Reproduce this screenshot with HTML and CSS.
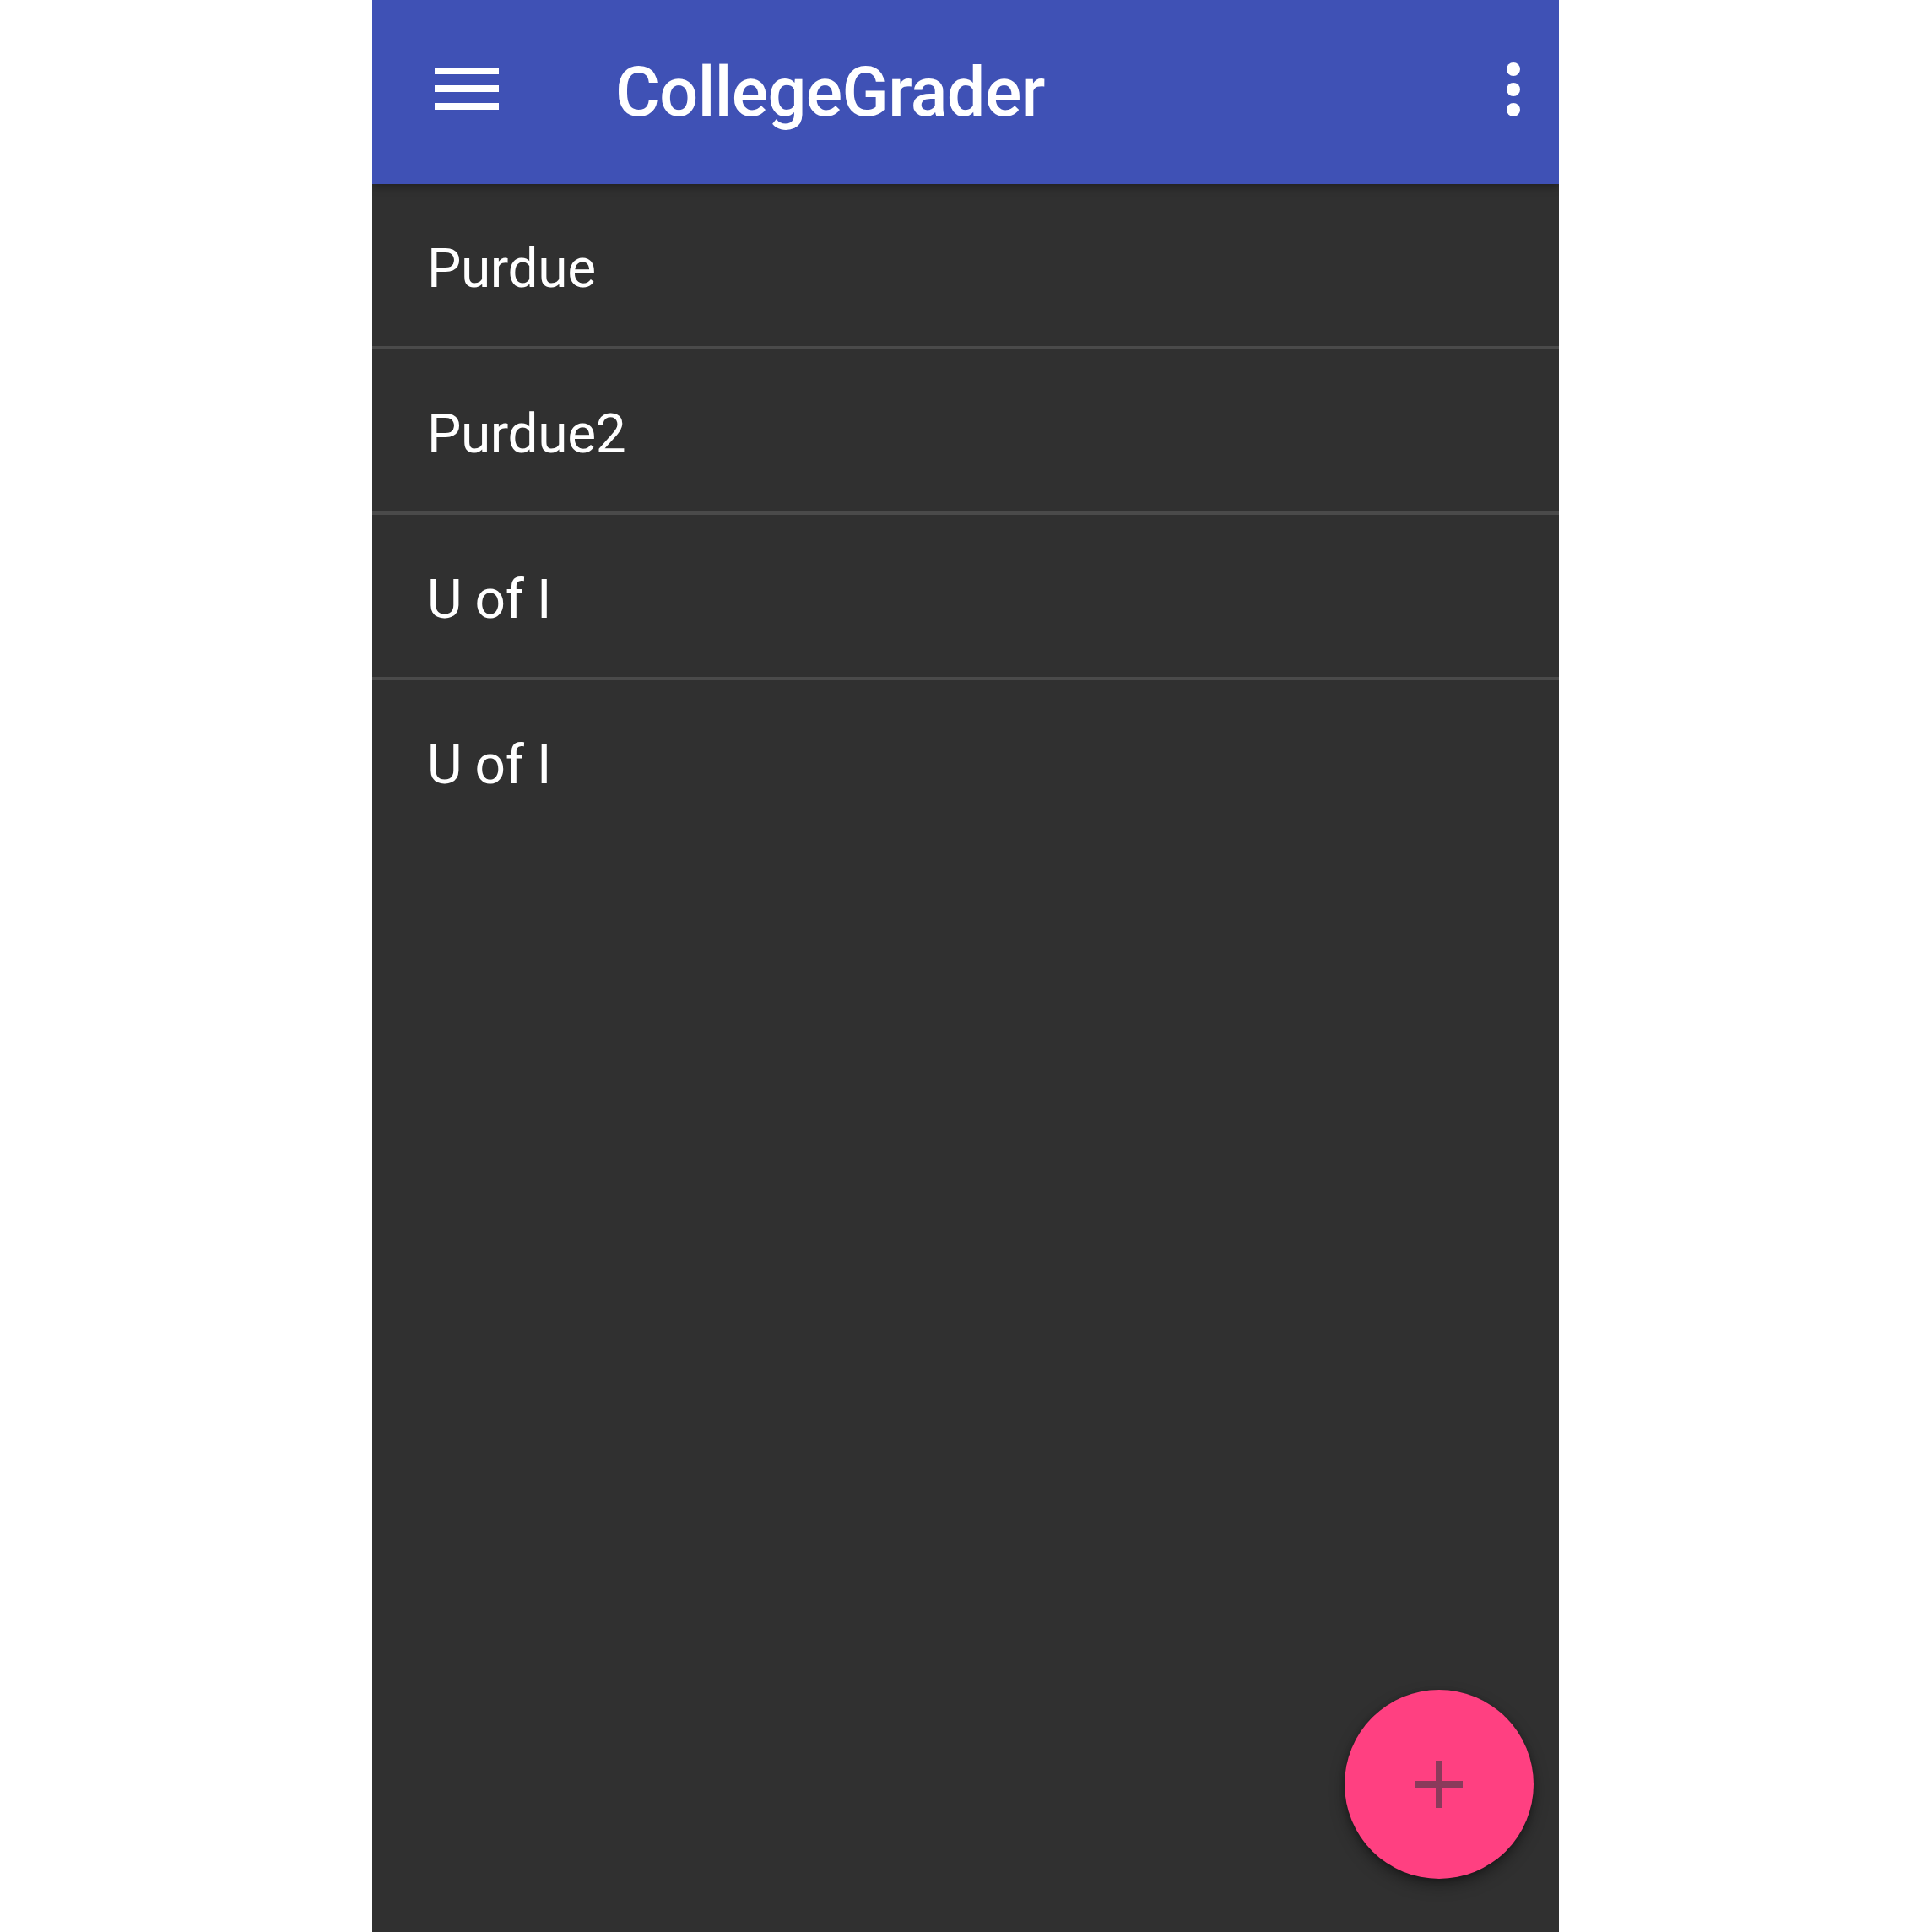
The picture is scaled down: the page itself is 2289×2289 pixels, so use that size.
FILE: index.html
```html
<!DOCTYPE html>
<html lang="en">
<head>
<meta charset="utf-8">
<title>CollegeGrader</title>
<link rel="stylesheet" href="styles.css">
</head>
<body>
<div class="phone">
  <header class="toolbar">
    <svg class="menu-icon" width="76" height="50" viewBox="0 0 76 50" aria-hidden="true">
      <rect x="0" y="0" width="76" height="8" fill="#fff"/>
      <rect x="0" y="21" width="76" height="8" fill="#fff"/>
      <rect x="0" y="42" width="76" height="8" fill="#fff"/>
    </svg>
    <h1 class="title">CollegeGrader</h1>
    <svg class="more-icon" width="16" height="64" viewBox="0 0 16 64" aria-hidden="true">
      <circle cx="8" cy="8" r="8" fill="#fff"/>
      <circle cx="8" cy="32" r="8" fill="#fff"/>
      <circle cx="8" cy="56" r="8" fill="#fff"/>
    </svg>
  </header>
  <ul class="list">
    <li class="row">Purdue</li>
    <li class="row">Purdue2</li>
    <li class="row">U of I</li>
    <li class="row">U of I</li>
  </ul>
  <button class="fab" aria-label="Add">
    <svg width="56" height="56" viewBox="0 0 56 56" aria-hidden="true">
      <rect x="24" y="0" width="8" height="56" fill="#8a3a5b"/>
      <rect x="0" y="24" width="56" height="8" fill="#8a3a5b"/>
    </svg>
  </button>
</div>
</body>
</html>
```

FILE: styles.css
```css
html, body {
  margin: 0;
  padding: 0;
  background: #ffffff;
}

body {
  font-family: Roboto, "Noto Sans", "Liberation Sans", sans-serif;
}

.phone {
  position: relative;
  width: 1406px;
  height: 2289px;
  margin: 0 0 0 441px;
  background: #303030;
  overflow: hidden;
}

.toolbar {
  position: relative;
  z-index: 1;
  height: 218px;
  background: #3f51b5;
  display: flex;
  align-items: center;
  padding: 0 46px 0 74px;
  box-sizing: border-box;
  box-shadow: 0 3px 10px rgba(0, 0, 0, 0.35);
}

.menu-icon {
  flex: none;
  display: block;
  margin-bottom: 8px;
}

.title {
  margin: 0 0 0 138px;
  font-size: 81px;
  font-weight: 500;
  letter-spacing: -0.6px;
  color: #ffffff;
  line-height: normal;
  flex: 1;
}

.more-icon {
  flex: none;
  display: block;
  margin-bottom: 6px;
}

.list {
  list-style: none;
  margin: 0;
  padding: 0;
}

.row {
  height: 196px;
  box-sizing: border-box;
  padding: 8px 0 0 65px;
  display: flex;
  align-items: center;
  font-size: 64px;
  letter-spacing: -0.4px;
  color: #ffffff;
  border-bottom: 4px solid #4a4a4a;
}

.row:last-child {
  border-bottom: none;
  height: 192px;
}

.fab {
  position: absolute;
  right: 30px;
  bottom: 63px;
  width: 224px;
  height: 224px;
  border: none;
  border-radius: 50%;
  background: #ff4081;
  padding: 0;
  display: flex;
  align-items: center;
  justify-content: center;
  box-shadow: 0 8px 18px rgba(0, 0, 0, 0.35), 0 2px 6px rgba(0, 0, 0, 0.25);
}

.fab svg {
  display: block;
}
```
